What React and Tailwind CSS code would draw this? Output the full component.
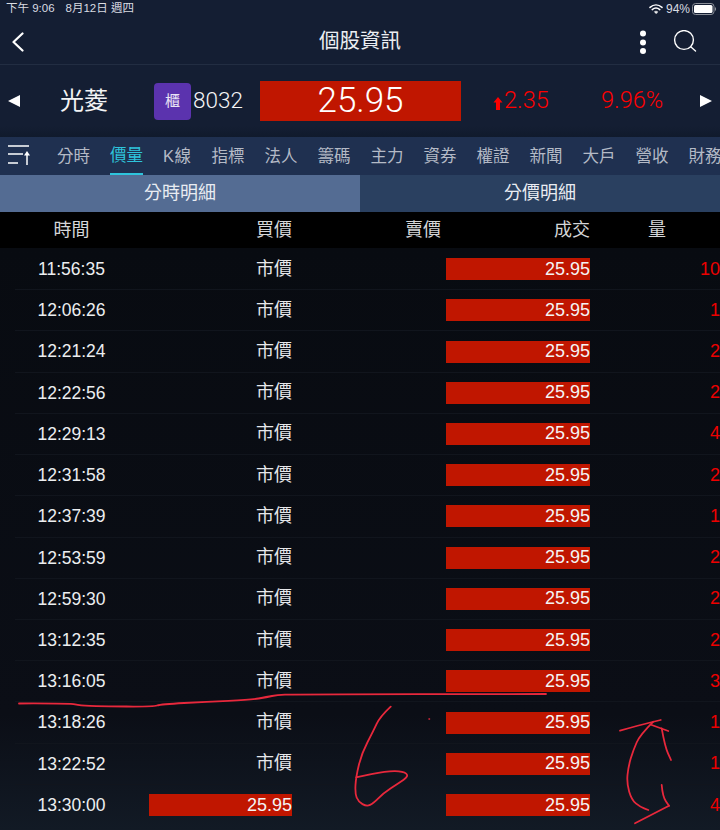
const F = { fontFamily: '"Liberation Sans","Noto Sans CJK TC",sans-serif' };
const LIGHT = { fontFamily: 'Roboto,"Liberation Sans",sans-serif', fontWeight: 300 };

const tabs = ["分時", "價量", "K線", "指標", "法人", "籌碼", "主力", "資券", "權證", "新聞", "大戶", "營收", "財務"];
const rows = [
  ["11:56:35", "10"], ["12:06:26", "1"], ["12:21:24", "2"], ["12:22:56", "2"], ["12:29:13", "4"],
  ["12:31:58", "2"], ["12:37:39", "1"], ["12:53:59", "2"], ["12:59:30", "2"], ["13:12:35", "2"],
  ["13:16:05", "3"], ["13:18:26", "1"], ["13:22:52", "1"], ["13:30:00", "4"],
];

function StatusBar() {
  return (
    <div className="flex h-[18px] items-center justify-between pl-[6px] pr-[3px] text-[11.5px] text-[#d9dce2]">
      <div className="flex gap-[11px]">
        <span>下午 9:06</span>
        <span>8月12日 週四</span>
      </div>
      <div className="flex items-center gap-[3px]">
        <svg width="14" height="10" viewBox="0 0 14 10" fill="none" stroke="#fff" strokeLinecap="round">
          <path d="M1 3.400C4.600 .2 9.400 .2 13 3.400" strokeWidth="1.500" />
          <path d="M3.200 5.600C5.500 3.600 8.500 3.600 10.800 5.600" strokeWidth="1.500" />
          <path d="M7 9.600 5.300 7.700C6.300 7 7.700 7 8.700 7.700Z" fill="#fff" strokeWidth="0.500" />
        </svg>
        <span className="text-[12px]">94%</span>
        <svg width="25" height="12" viewBox="0 0 25 12" className="ml-[-1px]">
          <rect x="0.500" y="0.500" width="21.500" height="11" rx="3" fill="none" stroke="#8a8f99" />
          <rect x="2" y="2" width="18.500" height="8" rx="1.500" fill="#fff" />
          <rect x="23" y="4.500" width="1" height="3" fill="#8a8f99" />
        </svg>
      </div>
    </div>
  );
}

function NavBar() {
  return (
    <div className="flex h-[47px] items-center justify-between pl-[11px] pr-[23px] border-b border-[#222d42]">
      <svg width="14" height="20" viewBox="0 0 14 20" fill="none" stroke="#fff" strokeWidth="2.200" strokeLinecap="round" strokeLinejoin="round" className="mt-[2px]">
        <path d="M11.500 1.500 2.500 10l9 8.500" />
      </svg>
      <div className="text-[20.5px] text-[#eceef2] ml-[294px]">個股資訊</div>
      <div className="flex items-center gap-[26px] ml-auto">
        <svg width="8" height="24" viewBox="0 0 8 24" fill="#fff" className="mt-[1px]">
          <circle cx="4" cy="3.500" r="3" />
          <circle cx="4" cy="12.500" r="3" />
          <circle cx="4" cy="21" r="3" />
        </svg>
        <svg width="24" height="22" viewBox="0 0 24 22" fill="none" stroke="#fff" strokeWidth="1.400" strokeLinecap="round">
          <circle cx="11" cy="10" r="9.400" />
          <path d="M18 17l4.500 4" />
        </svg>
      </div>
    </div>
  );
}

function QuoteBar() {
  return (
    <div className="flex h-[72px] items-center bg-gradient-to-b from-[#141e33] from-[85%] to-[#101a2c]">
      <svg width="12" height="12" viewBox="0 0 12 12" fill="#fff" className="ml-[8px]">
        <path d="M12 0v12L0 6z" />
      </svg>
      <div className="ml-[40px] w-[48px] text-[24px] whitespace-nowrap text-[#f2f3f5]">光菱</div>
      <div className="ml-[46px] flex h-[37px] w-[37px] items-center justify-center rounded-[4px] bg-[#5b33ae] text-[15px] text-[#e8e3f5]">櫃</div>
      <div className="ml-[2px] w-[51px] text-[22.5px] text-[#f4f5f7]" style={LIGHT}>8032</div>
      <div className="ml-[16px] flex h-[40px] w-[201px] items-center justify-center bg-[#c01600] text-[35px] text-white" style={LIGHT}>25.95</div>
      <svg width="10" height="13" viewBox="0 0 10 13" fill="#ff0000" className="ml-[32px] mt-[5px]">
        <path d="M5 0l4.500 5.500H7V13H3V5.500H.5z" />
      </svg>
      <div className="ml-[1px] w-[47px] text-[23.5px] text-[#ff0000]" style={LIGHT}>2.35</div>
      <div className="ml-[50px] w-[68px] text-[23.5px] text-[#ff0000]" style={LIGHT}>9.96%</div>
      <svg width="12" height="12" viewBox="0 0 12 12" fill="#fff" className="ml-[31px]">
        <path d="M0 0v12l12-6z" />
      </svg>
    </div>
  );
}

function TabBar() {
  return (
    <div className="flex h-[38px] overflow-hidden bg-[#1f3050]">
      <svg width="24" height="20" viewBox="0 0 24 20" fill="none" stroke="#fff" strokeWidth="1.500" className="ml-[8px] mt-[8px] shrink-0">
        <path d="M0 1h21M0 9h15M0 18h10" />
        <path d="M19 20V10" />
        <path d="M19 6l3 4.500h-6z" fill="#fff" stroke="none" />
      </svg>
      <div className="ml-[25px] flex gap-5">
        {tabs.map((t, i) => (
          <div
            key={t}
            className={
              i === 1
                ? "flex h-[38px] shrink-0 items-center text-[16.5px] whitespace-nowrap text-[#2ec4dc] border-b-2 border-[#2ec4dc]"
                : i === 2
                ? "flex h-[38px] shrink-0 items-center text-[16.5px] whitespace-nowrap text-[#b4bac6] tracking-[0.5px]"
                : "flex h-[38px] shrink-0 items-center text-[16.5px] whitespace-nowrap text-[#b4bac6]"
            }
          >
            {t}
          </div>
        ))}
      </div>
    </div>
  );
}

function SubTabs() {
  return (
    <div className="flex h-[37px] text-[18px] text-[#e9ecf2]">
      <div className="flex w-[360px] items-center justify-center bg-[#546c93]">分時明細</div>
      <div className="flex w-[360px] items-center justify-center bg-[#2a4060]">分價明細</div>
    </div>
  );
}

function TableHeader() {
  return (
    <div className="flex h-[36px] items-center bg-black text-[18px] text-[#d5d6d8]">
      <div className="w-[143px] text-center">時間</div>
      <div className="ml-[6px] w-[143px] text-right">買價</div>
      <div className="w-[149px] text-right">賣價</div>
      <div className="w-[149px] text-right">成交</div>
      <div className="w-[76px] text-right">量</div>
    </div>
  );
}

function Row({ time, vol, bid }) {
  return (
    <div className="ml-[15px] flex h-[41.23px] items-center">
      <div className="w-[113px] text-center text-[17.5px] text-[#eceef0]">{time}</div>
      {bid ? (
        <div className="ml-[21px] flex h-[22px] w-[143px] items-center justify-end bg-[#c01600] text-[18px] text-[#f4f4f4]">25.95</div>
      ) : (
        <div className="ml-[21px] w-[143px] text-right text-[18px] text-[#e6e7ea]">市價</div>
      )}
      <div className="ml-[154px] flex h-[22px] w-[144px] items-center justify-end bg-[#c01600] text-[18px] text-[#f4f4f4]">25.95</div>
      <div className="flex-1 text-right text-[18px] text-[#ee0000]">{vol}</div>
    </div>
  );
}

function smooth(pts) {
  let d = `M${pts[0][0]} ${pts[0][1]}`;
  for (let i = 1; i < pts.length - 1; i++) {
    const mx = (pts[i][0] + pts[i + 1][0]) / 2;
    const my = (pts[i][1] + pts[i + 1][1]) / 2;
    d += `Q${pts[i][0]} ${pts[i][1]} ${mx} ${my}`;
  }
  const last = pts[pts.length - 1];
  return d + `L${last[0]} ${last[1]}`;
}

const strokes = [
  [[19, 703.5], [70, 703.3], [80, 705.5], [100, 706.3], [153, 706.7], [161, 704.3], [207, 701.7], [250, 700], [267, 697], [277, 695], [293, 694.3], [546, 694]],
  [[390.7, 706.7], [380, 716.7], [373, 731.7], [361.7, 753.3], [356, 776.7], [355, 793.3], [358.3, 801.7], [366.7, 806.5], [373.3, 803.3], [383.3, 793.3], [398.3, 783.3], [409, 776], [403.3, 771.3], [386.7, 771], [356, 777.3]],
  [[620, 730.7], [640, 725], [660.7, 720]],
  [[668.3, 731], [651.7, 725]],
  [[653.3, 721.7], [640, 735], [633.3, 750], [628.3, 766.7], [626.7, 783.3], [631.7, 800], [640, 806.7], [648.3, 810]],
  [[661.7, 728.3], [665, 746.7], [671, 760]],
  [[661.7, 785], [662.7, 796.7], [669, 805.7]],
  [[669, 805.7], [635, 823.3]],
];

function Scribbles() {
  return (
    <svg className="absolute left-0 top-0 pointer-events-none" width="720" height="830" viewBox="0 0 720 830" fill="none" stroke="#e8283c" strokeWidth="1.800" strokeLinecap="round" strokeLinejoin="round">
      {strokes.map((s, i) => (
        <path key={i} d={smooth(s)} />
      ))}
      <path d="M429 719h.5" strokeWidth="1.500" />
    </svg>
  );
}

export default function App() {
  return (
    <div className="relative h-[830px] w-[720px] overflow-hidden bg-[#141e33]" style={F}>
      <StatusBar />
      <NavBar />
      <QuoteBar />
      <TabBar />
      <SubTabs />
      <TableHeader />
      <div className="h-[582px] pt-[1px] bg-gradient-to-b from-[#080b11] via-[#0b0e16] via-[80%] to-[#121a25] divide-y divide-[#11151d]">
        {rows.map(([t, v], i) => (
          <Row key={t} time={t} vol={v} bid={i === 13} />
        ))}
      </div>
      <Scribbles />
    </div>
  );
}
